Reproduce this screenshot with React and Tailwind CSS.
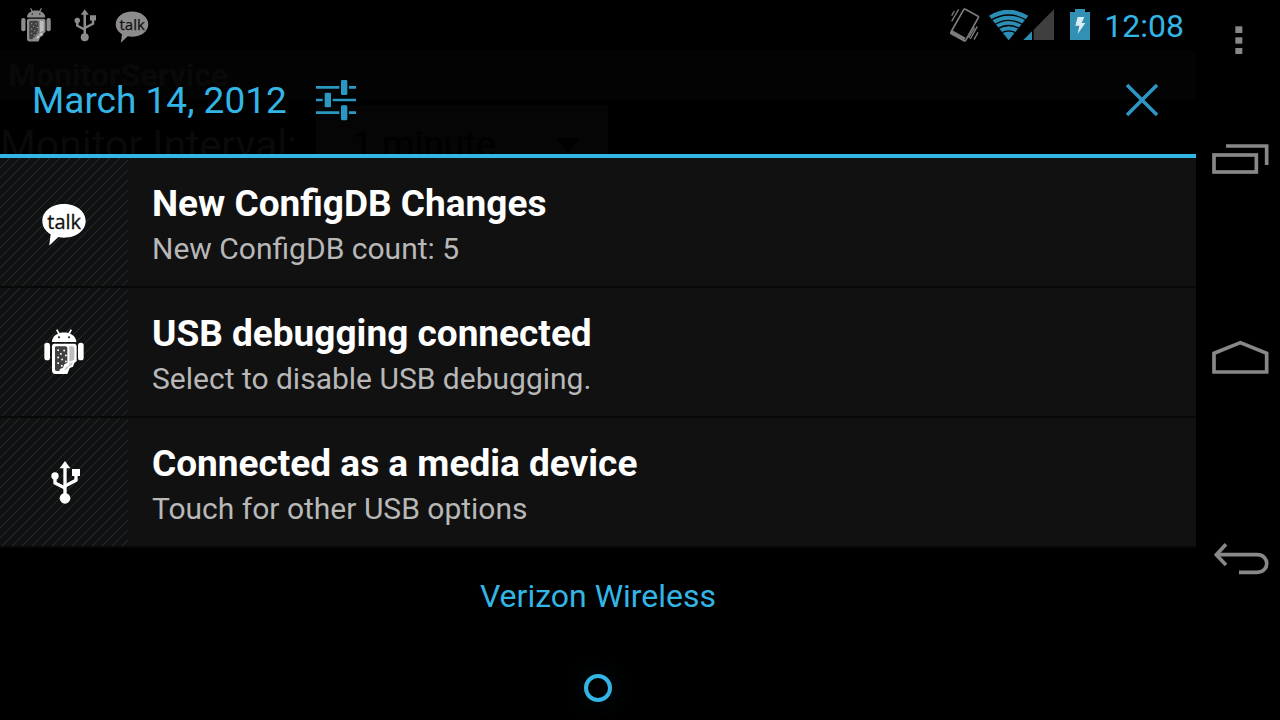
import React from 'react';

const FONT = "font-['Roboto','Liberation_Sans',sans-serif]";

function TalkIcon({ className }) {
  return (
    <svg viewBox="120 129 144 144" className={className} aria-hidden="true">
      <path
        fill="currentColor"
        d="M192 147c36 0 65 22 65 51s-29 50-65 50c-6 0-12-1-17-2l-26 25c-1 0-2 0-1-2l4-31c-15-9-25-23-25-40 0-29 29-51 65-51z"
      />
      <text x="142" y="222" fontSize="60" strokeWidth="1" className="fill-[#111] stroke-[#111] font-['Open_Sans','Noto_Sans',sans-serif]">
        talk
      </text>
    </svg>
  );
}

function DebugIcon({ className }) {
  const dots = [
    [84, 90], [102, 91], [92, 101], [84, 112], [107, 106],
    [96, 118], [84, 129], [107, 124], [95, 137],
  ];
  return (
    <svg viewBox="30 24 144 144" className={className} aria-hidden="true">
      <g fill="currentColor">
        <path d="M66 66c0-13 8-21 18-25l-6-11 4-2 7 11c8-2 19-2 26 0l7-11 4 2-6 11c10 4 19 12 19 25z" />
        <rect x="43" y="68" width="17" height="53" rx="8" />
        <rect x="144" y="68" width="17" height="53" rx="8" />
        <path d="M73 71h59c5 0 8 3 8 8v44l-7 6-4 11-10 4-3 8-4 10H76c-6 0-10-4-10-10V79c0-5 3-8 7-8z" />
      </g>
      <path d="M79 79h27c4 0 6 3 6 6v43l-9 5-4 10-9 4-2 6H80c-3 0-5-2-5-5V84c0-3 1-5 4-5z" fill="#404040" />
      <path d="M118 79h8c5 0 7 3 7 7v33l-9 4-6 2z" fill="#bdbdbd" />
      <path d="M118 130l10-4-2 10-9 3-5 9-9 2 4-9 8-2z" fill="#cfcfcf" />
      <g fill="currentColor">
        {dots.map(([x, y]) => (
          <rect key={`${x}-${y}`} x={x - 2} y={y - 2} width="5" height="5" />
        ))}
      </g>
      <circle cx="87" cy="52" r="3" fill="#111" />
      <circle cx="117" cy="52" r="3" fill="#111" />
    </svg>
  );
}

function UsbIcon({ className }) {
  return (
    <svg viewBox="120 144 144 144" className={className} aria-hidden="true">
      <g fill="none" stroke="currentColor" strokeWidth="10" strokeLinejoin="round">
        <path d="M195 168v90" />
        <path d="M165 200v19l30 15" />
        <path d="M228 190v21l-33 17" />
      </g>
      <g fill="currentColor">
        <path d="M195 153l16 22h-32z" />
        <circle cx="165" cy="198" r="11" />
        <rect x="216" y="177" width="24" height="21" />
        <circle cx="195" cy="265" r="16" />
      </g>
    </svg>
  );
}

function VibrateIcon() {
  return (
    <svg viewBox="30 21 90 108" className="h-9 w-[30px] text-[#7c7c7c]" aria-label="Vibrate">
      <path d="M76 28l37 20c2 1 3 3 2 5l-38 68c-1 2-3 2-5 1l-38-21c-2-1-2-3-1-5l38-67c1-2 3-2 5-1z" fill="none" stroke="currentColor" strokeWidth="5" />
      <path d="M37 91l40 22-6 10-40-23z" fill="currentColor" />
      <g stroke="currentColor" strokeWidth="4" fill="none">
        <path d="M43 33l-8 14M56 28L35 64" />
        <path d="M112 79L91 117M114 97l-12 22M104 83L86 114" />
      </g>
    </svg>
  );
}

function SignalIcons() {
  return (
    <svg viewBox="147 24 198 102" className="h-[34px] w-[66px]" aria-label="Wi-Fi and mobile signal">
      <defs>
        <clipPath id="fan">
          <path d="M206 121L147 47Q206 12 265 47z" />
        </clipPath>
      </defs>
      <g clipPath="url(#fan)">
        <rect x="147" y="24" width="120" height="100" fill="#2b8fb5" />
        <g fill="none" stroke="#000" strokeWidth="4">
          <path d="M150 62Q206 28 262 62" />
          <path d="M160 76Q206 46 252 76" />
          <path d="M170 88Q206 65 242 88" />
          <path d="M180 101Q206 84 232 101" />
        </g>
      </g>
      <path d="M250 120l26-26v26z" fill="#2b8fb5" />
      <path d="M281 89l61-61v92h-61z" fill="#3f3f3f" />
    </svg>
  );
}

function BatteryIcon() {
  return (
    <svg viewBox="387 24 66 102" className="h-[34px] w-[22px]" aria-label="Battery charging">
      <path d="M405 27h30v9h15v84h-60V36h15z" fill="#3290b5" />
      <path d="M413 51h20l-8 18h11l-23 33 5-25h-12z" fill="#dceef5" />
    </svg>
  );
}

function SlidersIcon() {
  return (
    <svg viewBox="48 27 126 126" className="h-[42px] w-[42px] text-[#2b98c4]" aria-hidden="true">
      <path d="M51 52h70M150 52h21M51 90h20M101 90h70M51 128h70M150 128h21" stroke="currentColor" strokeWidth="8" />
      <g fill="currentColor">
        <rect x="126" y="30" width="19" height="45" rx="4" />
        <rect x="77" y="68" width="19" height="44" rx="4" />
        <rect x="126" y="106" width="19" height="45" rx="4" />
      </g>
    </svg>
  );
}

const notifications = [
  { Icon: TalkIcon, title: 'New ConfigDB Changes', text: 'New ConfigDB count: 5' },
  { Icon: DebugIcon, title: 'USB debugging connected', text: 'Select to disable USB debugging.' },
  { Icon: UsbIcon, title: 'Connected as a media device', text: 'Touch for other USB options' },
];

function Hatch({ id }) {
  return (
    <svg className="absolute inset-0 h-full w-full" aria-hidden="true">
      <defs>
        <pattern id={id} width="10" height="10" patternUnits="userSpaceOnUse">
          <path d="M-1 11L11 -1M-1 1L1 -1M9 11L11 9" stroke="#1b3238" strokeWidth="1" />
        </pattern>
      </defs>
      <rect width="100%" height="100%" fill={`url(#${id})`} />
    </svg>
  );
}

function Notification({ Icon, title, text, id }) {
  return (
    <li className="flex h-[130px] border-b-2 border-[#080808] bg-[#111]">
      <div className="relative flex w-32 shrink-0 items-center justify-center">
        <Hatch id={id} />
        <Icon className="relative h-12 w-12 text-white" />
      </div>
      <div className="flex flex-col justify-center pt-[6px] pl-6">
        <h2 className="text-[37px] leading-[48px] font-bold text-white">{title}</h2>
        <p className="text-[30px] leading-[42px] text-[#b8b8b8]">{text}</p>
      </div>
    </li>
  );
}

function StatusBar() {
  return (
    <div className="flex h-[50px] items-center justify-between pr-3 pl-[18px]">
      <div className="flex items-center gap-3 text-[#8c8c8c]">
        <DebugIcon className="h-9 w-9" />
        <UsbIcon className="h-9 w-9" />
        <TalkIcon className="h-9 w-9" />
      </div>
      <div className="flex items-center">
        <VibrateIcon />
        <div className="ml-[9px]">
          <SignalIcons />
        </div>
        <div className="mr-[13px] ml-[14px]">
          <BatteryIcon />
        </div>
        <time className="pt-[2px] text-[32px] leading-10 text-[#33b5e5]">12:08</time>
      </div>
    </div>
  );
}

function DimmedApp() {
  return (
    <div className="absolute inset-0 overflow-hidden" aria-hidden="true">
      <div className="flex h-[50px] items-center bg-[#030303] pl-2 text-[32px] font-bold text-[#090909]">MonitorService</div>
      <div className="mt-[5px] flex items-start text-[41px] leading-[80px] text-[#0a0a0a]">
        <span className="w-[316px] whitespace-nowrap">Monitor Interval:</span>
        <span className="flex w-[292px] items-center justify-between bg-[#050505] pr-7 pl-9 text-[37px] text-black">
          1 minute
          <svg viewBox="0 0 24 14" className="h-[14px] w-6">
            <path d="M0 0h24L12 14z" fill="#000" />
          </svg>
        </span>
      </div>
    </div>
  );
}

function ShadeHeader() {
  return (
    <header className="relative h-[108px] border-b-4 border-[#33b5e5]">
      <DimmedApp />
      <div className="relative flex h-[100px] items-center pr-[38px] pl-8">
        <h1 className="pt-[2px] text-[37px] leading-[48px] text-[#33b5e5]">March 14, 2012</h1>
        <button type="button" aria-label="Settings" className="ml-7">
          <SlidersIcon />
        </button>
        <button type="button" aria-label="Clear all notifications" className="ml-auto">
          <svg viewBox="0 0 32 32" className="h-8 w-8" aria-hidden="true">
            <path d="M1 1l30 30M31 1L1 31" stroke="#2b98c4" strokeWidth="3.5" />
          </svg>
        </button>
      </div>
    </header>
  );
}

function NavBar() {
  return (
    <nav className="flex w-[84px] shrink-0 flex-col items-center bg-black text-[#888]">
      <button type="button" aria-label="Menu">
        <svg viewBox="30 -30 192 180" className="h-[60px] w-16" fill="currentColor">
          <rect x="118" y="49" width="21" height="20" />
          <rect x="118" y="82" width="21" height="19" />
          <rect x="118" y="114" width="21" height="18" />
        </svg>
      </button>
      <button type="button" aria-label="Recent apps" className="flex h-[200px] items-center">
        <svg viewBox="30 378 192 144" className="h-12 w-16" fill="none" stroke="currentColor" strokeWidth="11">
          <rect x="54" y="435" width="127" height="51" />
          <path d="M90 408h122v57" />
        </svg>
      </button>
      <button type="button" aria-label="Home" className="flex h-[200px] items-center">
        <svg viewBox="30 18 192 144" className="h-12 w-16" fill="none" stroke="currentColor" strokeWidth="11">
          <path d="M54 126V70l79-32 79 32v56z" />
        </svg>
      </button>
      <button type="button" aria-label="Back" className="flex h-[200px] items-center">
        <svg viewBox="30 618 192 144" className="h-12 w-16" fill="none" stroke="currentColor" strokeWidth="11">
          <path d="M61 674h122c39 0 39 53 0 53h-54" />
          <path d="M90 643l-29 31 29 31" />
        </svg>
      </button>
    </nav>
  );
}

export default function App() {
  return (
    <div className={`flex min-h-screen bg-black ${FONT}`}>
      <main className="flex min-w-0 flex-1 flex-col">
        <StatusBar />
        <ShadeHeader />
        <ul>
          {notifications.map((n, i) => (
            <Notification key={n.title} id={`hatch-${i}`} {...n} />
          ))}
        </ul>
        <p className="pt-7 text-center text-[32px] leading-10 text-[#33b5e5]">Verizon Wireless</p>
        <div className="mt-auto flex h-16 items-center justify-center">
          <button type="button" aria-label="Close notification shade" className="h-7 w-7 rounded-full border-4 border-[#33b5e5] shadow-[0_0_24px_#33b5e518]" />
        </div>
      </main>
      <NavBar />
    </div>
  );
}
